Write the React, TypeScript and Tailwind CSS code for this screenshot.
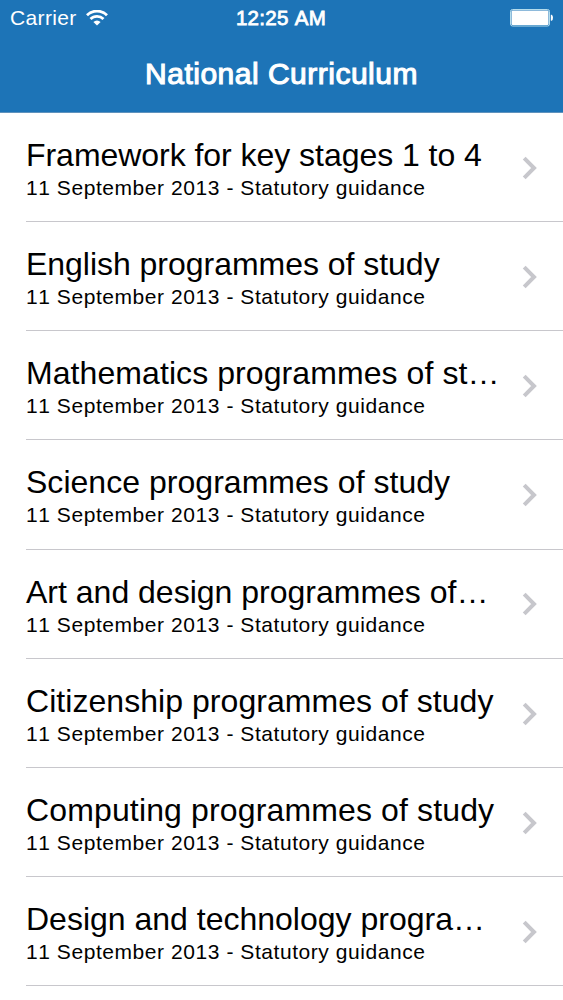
type Guidance = {
  title: string;
  // letter spacing of the title
  tracking: string;
};

const items: Guidance[] = [
  { title: "Framework for key stages 1 to 4", tracking: "tracking-[-0.04px]" },
  { title: "English programmes of study", tracking: "tracking-[-0.03px]" },
  { title: "Mathematics programmes of st…", tracking: "tracking-[0.08px]" },
  { title: "Science programmes of study", tracking: "tracking-[0.03px]" },
  { title: "Art and design programmes of…", tracking: "tracking-[0px]" },
  { title: "Citizenship programmes of study", tracking: "tracking-[0.05px]" },
  { title: "Computing programmes of study", tracking: "tracking-[0.14px]" },
  { title: "Design and technology progra…", tracking: "tracking-[0px]" },
];

function WifiIcon() {
  return (
    <svg width="22" height="16" viewBox="0 0 22 16" fill="none" stroke="white">
      <path d="M1 5.2a14.2 14.2 0 0 1 20 0" strokeWidth="2.8" />
      <path d="M4.5 9a9.2 9.2 0 0 1 13 0" strokeWidth="2.8" />
      <path d="M11 15.6 7.4 12a5 5 0 0 1 7.2 0Z" fill="white" stroke="none" />
    </svg>
  );
}

function BatteryIcon() {
  return (
    <svg width="44" height="18" viewBox="0 0 44 18" fill="none">
      <rect x="0.5" y="0.5" width="39" height="16.5" rx="2" stroke="#b4dcec" />
      <rect x="1.5" y="1.5" width="37" height="14.5" rx="1" fill="white" />
      <path d="M40.8 5.8h.8q1.4.4 1.4 3t-1.4 3h-.8Z" fill="white" />
    </svg>
  );
}

export default function App() {
  return (
    <div className="h-[1000px] w-[563px] overflow-hidden bg-white font-['Liberation_Sans',Arial,sans-serif] text-black [font-kerning:none]">
      <header className="h-[113px] border-b border-[#5f92bd] bg-[#1d74b7] text-white">
        <div className="grid h-9 grid-cols-3 items-center pr-[9px] pl-[10px]">
          <div className="flex items-center gap-[9px] text-[21px] tracking-[0.35px]">
            Carrier
            <WifiIcon />
          </div>
          <div className="pr-0.5 text-center text-[20.5px] tracking-[0.3px] whitespace-nowrap [-webkit-text-stroke:0.8px_white]">
            12:25 AM
          </div>
          <div className="flex justify-end">
            <BatteryIcon />
          </div>
        </div>
        <h1 className="pt-[18px] text-center text-[30px] leading-10 tracking-[0.5px] [-webkit-text-stroke:1.1px_white]">
          National Curriculum
        </h1>
      </header>
      <ul className="pl-[26px]">
        {items.map(({ title, tracking }) => (
          <li
            key={title}
            className="flex h-[109.15px] items-center justify-between border-b border-[#c8c7cc] pr-[26px]"
          >
            <div className="pt-1.5 whitespace-nowrap">
              <div className={`text-[32px] leading-9 ${tracking}`}>{title}</div>
              <div className="text-[21px] leading-[30px] tracking-[0.56px]">
                11 September 2013 - Statutory guidance
              </div>
            </div>
            <svg className="mt-[1.5px]" width="15" height="24" viewBox="0 0 15 24" fill="none">
              <path d="m2.2 2.2 9.8 9.8-9.8 9.8" stroke="#c7c7cc" strokeWidth="4" />
            </svg>
          </li>
        ))}
      </ul>
    </div>
  );
}
